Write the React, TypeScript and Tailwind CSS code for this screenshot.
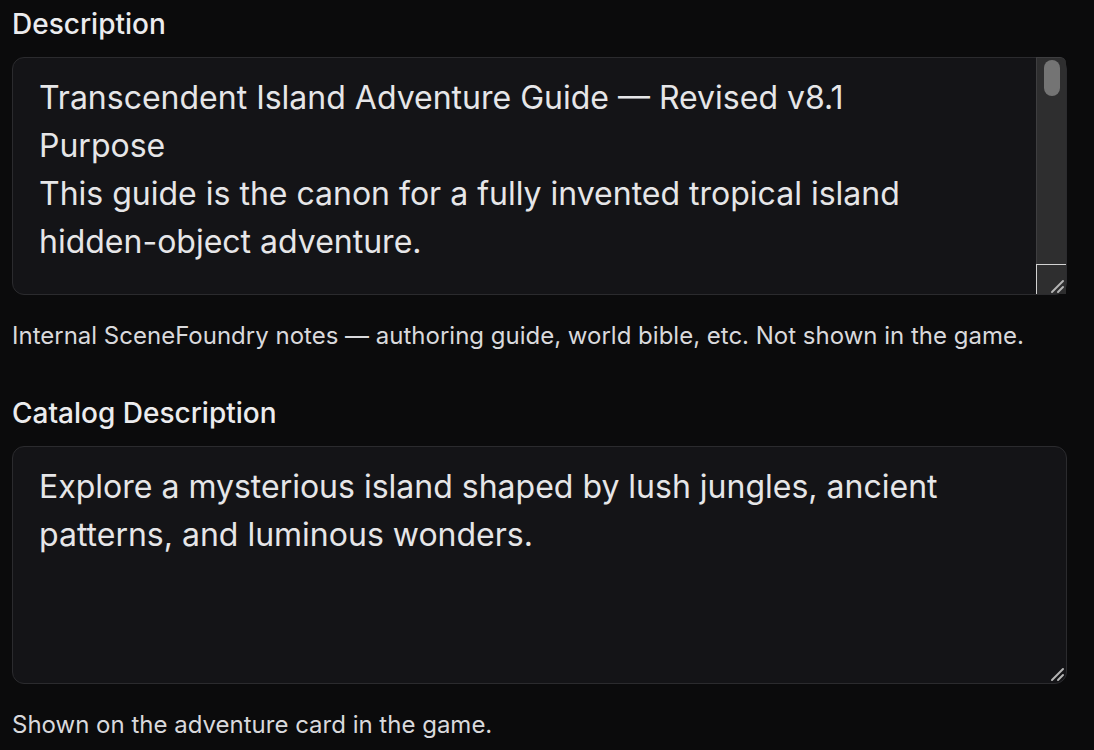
import { useState } from "react";

const guideText = [
  "Transcendent Island Adventure Guide — Revised v8.1",
  "Purpose",
  "This guide is the canon for a fully invented tropical island hidden-object adventure.",
  "",
  "World Overview",
  "The island sits alone in a warm, glassy sea. Jungles climb its slopes, ancient carved patterns mark its stones, and luminous flora wakes at dusk.",
  "",
  "Tone",
  "Wonder first. Calm exploration, gentle mystery, no horror and no violence.",
  "",
  "Regions",
  "1. Moonlit Lagoon — tide pools, coral arches, glowing shells.",
  "2. Verdant Canopy — rope bridges, orchids, hidden nests.",
  "3. Sunstone Ruins — spiral glyphs, fallen pillars, mosaics.",
  "4. Ember Peak — basalt terraces, steam vents, crystal caves.",
  "",
  "Object Rules",
  "Every hidden object must belong to the world. No modern items.",
].join("\n");

const catalogText =
  "Explore a mysterious island shaped by lush jungles, ancient patterns, and luminous wonders.";

// resize grip drawn by hand, the headless browser hides its own chrome
function Grip({ className }: { className: string }) {
  return (
    <svg
      className={className}
      width="16"
      height="16"
      viewBox="0 0 16 16"
      fill="none"
      stroke="#b4b4b4"
      strokeWidth="2"
      strokeLinecap="round"
    >
      <path d="M3 14L14 3" />
      <path d="M9 14L14 9" />
    </svg>
  );
}

function Field({
  label,
  hint,
  value,
  onChange,
  scrollable,
}: {
  label: string;
  hint: string;
  value: string;
  onChange: (v: string) => void;
  scrollable?: boolean;
}) {
  return (
    <div>
      <label className="block pt-1 text-[28px] leading-[40px] font-medium text-[#ececee]">
        {label}
      </label>
      <div className="relative mt-[13px]">
        <textarea
          className={
            scrollable
              ? "block h-[238px] w-full resize-none overflow-hidden rounded-xl border border-[#2b2b2e] bg-[#141417] py-4 pr-[66px] pl-[26px] text-[32px] leading-[48px] text-[#e6e6e8] outline-none"
              : "block h-[238px] w-full resize-none overflow-hidden rounded-xl border border-[#2b2b2e] bg-[#141417] px-[26px] py-4 text-[32px] leading-[48px] text-[#e6e6e8] outline-none"
          }
          value={value}
          onChange={(e) => onChange(e.target.value)}
        />
        {scrollable ? (
          <div className="pointer-events-none absolute top-0 right-px bottom-px flex w-[30px] flex-col">
            <div className="flex-1 rounded-tr-[6px] border-t border-l border-[#3e3e40] bg-[#2e2e2f] pt-[2px] pr-[6px] pl-[7px]">
              <div className="h-[36px] w-[16px] rounded-full bg-[#747474]" />
            </div>
            <div className="relative h-[30px] border-t border-l border-[#d2d2d2] bg-[#2e2e2f]">
              <Grip className="absolute right-px bottom-0" />
            </div>
          </div>
        ) : (
          <Grip className="pointer-events-none absolute right-[2px] bottom-[2px]" />
        )}
      </div>
      <p className="mt-[25px] text-[24px] leading-[32px] text-[#d9d9dc]">
        {hint}
      </p>
    </div>
  );
}

export default function App() {
  const [description, setDescription] = useState(guideText);
  const [catalog, setCatalog] = useState(catalogText);

  return (
    <div
      className="min-h-screen bg-[#0b0b0c] pr-[27px] pl-3"
      style={{ fontFamily: "Inter, 'Noto Sans', sans-serif" }}
    >
      <div className="flex flex-col gap-[37px]">
        <Field
          label="Description"
          hint="Internal SceneFoundry notes — authoring guide, world bible, etc. Not shown in the game."
          value={description}
          onChange={setDescription}
          scrollable
        />
        <Field
          label="Catalog Description"
          hint="Shown on the adventure card in the game."
          value={catalog}
          onChange={setCatalog}
        />
      </div>
    </div>
  );
}
